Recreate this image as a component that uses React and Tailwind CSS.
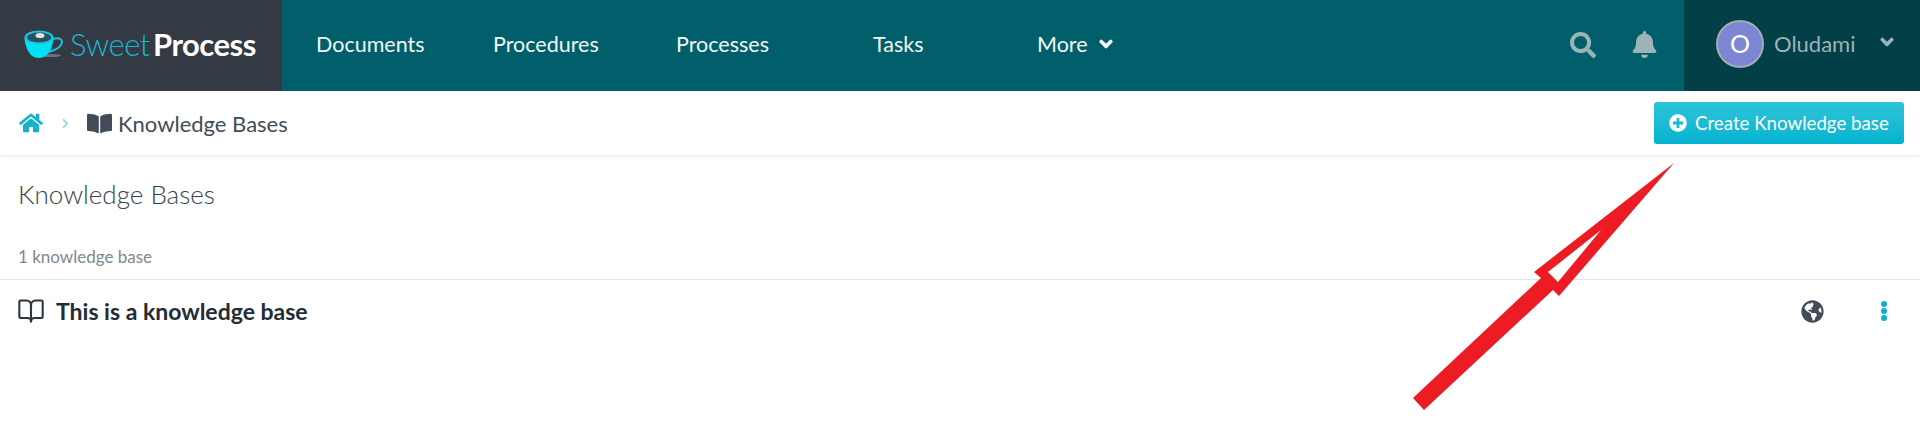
import React from "react";
import { FaHome, FaSearch, FaBell, FaChevronDown, FaChevronRight, FaPlusCircle, FaBookOpen, FaGlobeAmericas } from "react-icons/fa";
import { BookOpen } from "lucide-react";

const navItems = [
    { label: "Documents", className: "w-[177px]" },
    { label: "Procedures", className: "w-[183px]" },
    { label: "Processes", className: "w-[197px]" },
    { label: "Tasks", className: "w-[164px]" },
];

const CupLogo = () => (
    <svg width="40" height="28" viewBox="0 0 40 28" className="shrink-0">
        <ellipse cx="27" cy="25.5" rx="10" ry="1.6" fill="#6b7076" />
        <path d="M26 10 C36 6 41 10 36 16 C33 20 28 21 24 22" fill="none" stroke="#19c4de" strokeWidth="2" />
        <path d="M0.5 8 C1 14 3 21 7 25 C9 27 12 28 15 28 C18 28 21 27 23 25 C27 21 29 14 29.5 8 Z" fill="#00e1f5" />
        <ellipse cx="15" cy="7.5" rx="14.5" ry="7" fill="#1ec3dc" />
        <ellipse cx="15" cy="7.5" rx="12" ry="5" fill="#27535f" />
        <ellipse cx="16" cy="5.5" rx="4.5" ry="2.6" fill="#d9e2e6" />
    </svg>
);

const App = () => {
    return (
        <div className="relative h-[448px] w-[1920px] overflow-hidden bg-white font-['Lato',sans-serif]">
            {/* Top bar */}
            <header className="flex h-[91px] bg-[#005f6b]">
                <div className="flex w-[282px] items-center bg-[#343a43] pb-[3px] pl-6">
                    <CupLogo />
                    <span className="ml-[6px] text-[31px] leading-none font-light tracking-[-0.5px] text-[#19b5cf]">Sweet</span>
                    <span className="ml-[3px] text-[31px] leading-none font-bold tracking-[-0.5px] text-white">Process</span>
                </div>

                <nav className="flex flex-1 items-center pb-[3px] pl-[34px] text-[21.5px] text-[#f2f7f8]">
                    {navItems.map((item) => (
                        <a key={item.label} className={item.className}>{item.label}</a>
                    ))}
                    <a className="flex items-center">
                        More
                        <FaChevronDown stroke="currentColor" strokeWidth={50} className="ml-[11px] text-[14px] text-white" />
                    </a>
                </nav>

                <div className="flex items-center pb-[2px] text-[#9cb3b7]">
                    <FaSearch className="mr-[35px] text-[26px]" />
                    <FaBell className="mr-[26px] text-[27px]" />
                </div>

                <div className="flex w-[236px] items-center bg-[#023f47] pb-[4px] pl-8 text-[#9cb3b7]">
                    <div className="flex h-12 w-12 items-center justify-center rounded-full border-2 border-[#a3adb5] bg-[#7d86d3] text-[25px] text-white">O</div>
                    <span className="ml-[10px] text-[22px]">Oludami</span>
                    <FaChevronDown stroke="currentColor" strokeWidth={50} className="mb-1 ml-[24px] text-[14px]" />
                </div>
            </header>

            {/* Breadcrumb bar */}
            <div className="flex h-[64px] items-center justify-between pr-[16px] pl-[19px] shadow-[0_2px_3px_rgba(0,0,0,0.07)]">
                <div className="flex items-center">
                    <FaHome className="text-[24px] text-[#16b2cd]" />
                    <FaChevronRight className="ml-[17px] text-[11px] text-[#8fd6e4]" />
                    <FaBookOpen className="ml-[16px] text-[25px] text-[#434b59]" />
                    <span className="ml-[6px] text-[22px] text-[#434b59]">Knowledge Bases</span>
                </div>
                <button className="flex h-[42px] w-[250px] items-center rounded-[3px] bg-gradient-to-b from-[#2cc4d9] to-[#00b3cf] pl-[15px] text-[18.7px] text-white">
                    <FaPlusCircle className="text-[18px]" />
                    <span className="ml-[8px]">Create Knowledge base</span>
                </button>
            </div>

            {/* Page content */}
            <main>
                <h1 className="mt-[24px] pl-[18px] text-[26px] leading-[30px] font-light text-[#37424f]">Knowledge Bases</h1>
                <p className="mt-[38px] pl-[18px] text-[17px] leading-5 text-[#7f8790]">1 knowledge base</p>
                <div className="mt-[12px] border-t border-[#dfe3ea]"></div>
                <div className="flex items-center justify-between pt-[17px] pr-[33px] pl-[17px]">
                    <div className="flex items-center">
                        <BookOpen size={28} strokeWidth={1.8} className="text-[#2d3540]" />
                        <span className="ml-[11px] text-[23px] leading-6 font-bold text-[#232b36]">This is a knowledge base</span>
                    </div>
                    <div className="flex items-center">
                        <FaGlobeAmericas className="text-[23px] text-[#434b59]" />
                        <div className="ml-[57px] flex flex-col gap-[1px]">
                            <span className="h-[6px] w-[6px] rounded-full bg-[#00b3cf]"></span>
                            <span className="h-[6px] w-[6px] rounded-full bg-[#00b3cf]"></span>
                            <span className="h-[6px] w-[6px] rounded-full bg-[#00b3cf]"></span>
                        </div>
                    </div>
                </div>
            </main>

            {/* Red annotation arrow over the page */}
            <svg className="absolute top-0 left-0" width="1920" height="448" viewBox="0 0 1920 448">
                <path
                    fillRule="evenodd"
                    fill="#ed1c24"
                    d="M1674 163 L1534 272 L1541 278 L1413 398 L1424 410 L1553 290 L1559 296 Z M1601 230 L1548 272 L1558 282 Z"
                />
            </svg>
        </div>
    );
};

export default App;
